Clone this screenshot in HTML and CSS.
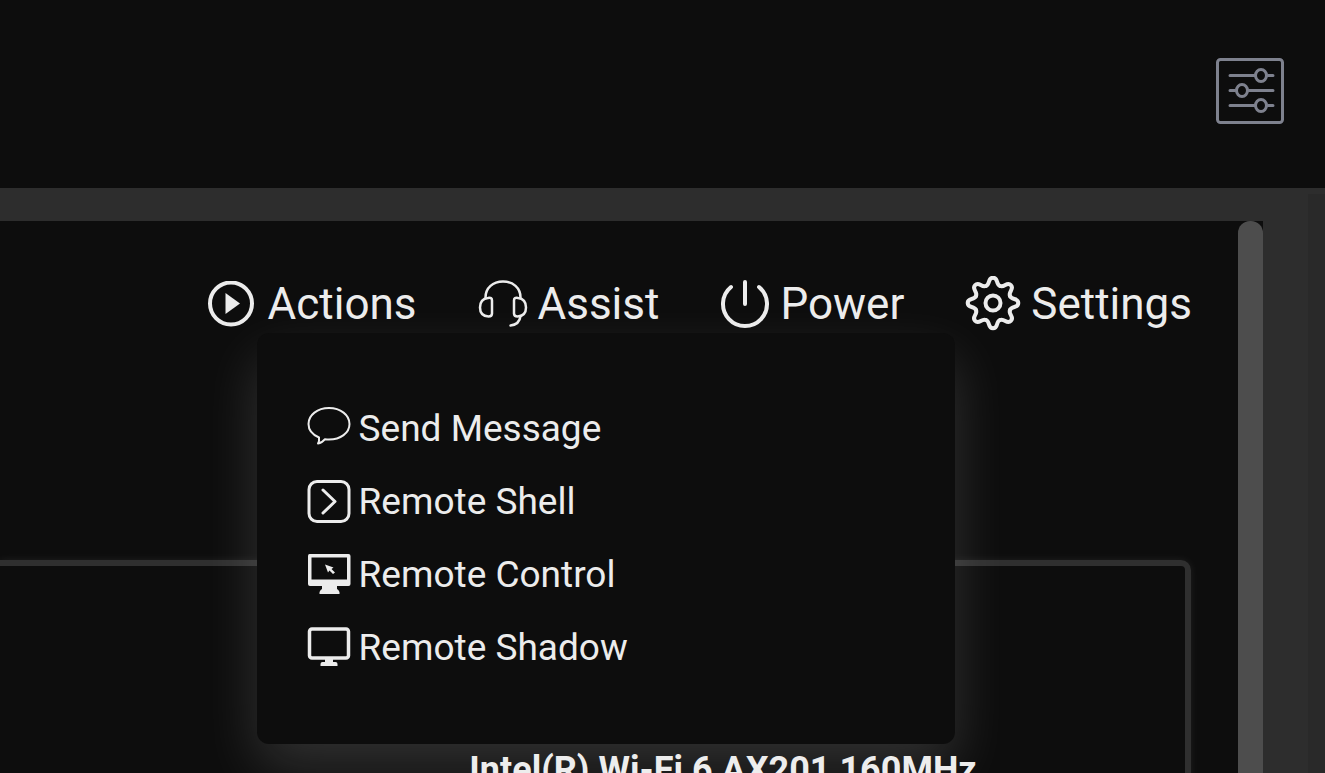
FILE: index.html
```
<!DOCTYPE html>
<html lang="en">
<head>
    <meta charset="UTF-8">
    <meta name="viewport" content="width=device-width, initial-scale=1.0">
    <title>Device</title>
    <link rel="stylesheet" href="styles.css">
</head>
<body>
    <header class="topbar">
        <button class="filter-btn" type="button" aria-label="Display options">
            <svg width="70" height="68" viewBox="0 0 70 68" fill="none" stroke="currentColor" stroke-width="3">
                <rect x="2.5" y="2.5" width="65" height="63" rx="3"/>
                <path stroke-linecap="round" d="M15 18.500H40M53 18.500H58M15 33.500H20M34 33.500H58M15 48.500H40M53 48.500H58"/>
                <ellipse cx="46" cy="18.500" rx="5.500" ry="6"/>
                <ellipse cx="27" cy="33.500" rx="5.500" ry="6"/>
                <ellipse cx="46" cy="48.500" rx="5.500" ry="6"/>
            </svg>
        </button>
    </header>

    <main class="page">
        <div class="panel">
            <nav>
                <ul class="toolbar">
                    <li class="has-menu">
                        <button type="button" class="tool tool-actions" aria-expanded="true">
                            <svg width="46" height="46" viewBox="0 0 46 46">
                                <circle cx="23" cy="22.500" r="21" fill="none" stroke="currentColor" stroke-width="4"/>
                                <path fill="currentColor" d="M17.500 12L32 22.500 17.500 33z"/>
                            </svg>
                            Actions
                        </button>
                        <ul class="menu">
                            <li><a href="#message">
                                <svg width="44" height="44" viewBox="0 0 44 44" fill="none" stroke="currentColor" stroke-width="2" stroke-linejoin="round">
                                    <path d="M12 30.500C5 27.500 1.500 22.500 1.500 17 1.500 8 10.500 1 22 1s20.500 7 20.500 16S33.500 32.500 22 32.500q-2 0-4-.3-3 3.800-7 4.300Q12.500 34 12 30.500z"/>
                                </svg>
                                Send Message
                            </a></li>
                            <li><a href="#shell">
                                <svg width="44" height="44" viewBox="0 0 44 44" fill="none" stroke="currentColor" stroke-width="3">
                                    <rect x="2" y="1.500" width="40" height="40" rx="8"/>
                                    <path stroke-linecap="round" stroke-linejoin="round" d="M16 10L28 21.500 16 33"/>
                                </svg>
                                Remote Shell
                            </a></li>
                            <li><a href="#control">
                                <svg width="44" height="44" viewBox="0 0 44 44" fill="currentColor">
                                    <path fill-rule="evenodd" d="M2.500 1H41.500q2 0 2 2V31q0 2-2 2H30v3q3 2 2.500 5H12.500Q12 38 15 36V33H3q-2 0-2-2V3Q1 1 2.500 1zM4.500 4.500V26.500H40V4.500z"/>
                                    <path d="M18 11.500L26.500 14.500 24.500 16 28 19.500 26 21 22.500 17.500 21 19.500z"/>
                                </svg>
                                Remote Control
                            </a></li>
                            <li><a href="#shadow">
                                <svg width="44" height="44" viewBox="0 0 44 44" fill="none" stroke="currentColor" stroke-width="3.500">
                                    <rect x="2.500" y="3" width="39" height="29" rx="2.500"/>
                                    <path fill="currentColor" stroke="none" d="M18 32h8v4h2.500q2 0 2 2v2h-17v-2q0-2 2-2H18z"/>
                                </svg>
                                Remote Shadow
                            </a></li>
                        </ul>
                    </li>
                    <li>
                        <button type="button" class="tool">
                            <svg width="50" height="50" viewBox="0 0 50 50" fill="none" stroke="currentColor" stroke-width="2.500" stroke-linecap="round">
                                <path d="M7.500 18.500C7.500 9 15 2.500 25 2.500s17.500 6.500 17.500 16"/>
                                <path d="M10 19q4-1 4 2.500v13q0 3-3.500 3Q2 37 2 28.500 2 20 10 19z"/>
                                <path d="M40 19q-4-1-4 2.500v13q0 3 3.500 3Q48 37 48 28.500 48 20 40 19z"/>
                                <path d="M42.500 37q-1 8.500-10 9.500"/>
                            </svg>
                            Assist
                        </button>
                    </li>
                    <li>
                        <button type="button" class="tool">
                            <svg width="50" height="50" viewBox="0 0 50 50" fill="none" stroke="currentColor" stroke-width="4" stroke-linecap="round">
                                <path d="M25 3V25M11 8A22 22 0 1 0 39 8"/>
                            </svg>
                            Power
                        </button>
                    </li>
                    <li>
                        <button type="button" class="tool">
                            <svg width="56" height="56" viewBox="-28 -27 56 56" fill="none" stroke="currentColor" stroke-width="4" stroke-linecap="round">
                                <defs>
                                    <path id="tooth" d="M-7-17C-2.500-18.800-5.500-25.300 0-25.300S2.500-18.800 7-17"/>
                                </defs>
                                <use href="#tooth"/>
                                <use href="#tooth" transform="rotate(45)"/>
                                <use href="#tooth" transform="rotate(90)"/>
                                <use href="#tooth" transform="rotate(135)"/>
                                <use href="#tooth" transform="rotate(180)"/>
                                <use href="#tooth" transform="rotate(225)"/>
                                <use href="#tooth" transform="rotate(270)"/>
                                <use href="#tooth" transform="rotate(315)"/>
                                <circle r="7.500"/>
                            </svg>
                            Settings
                        </button>
                    </li>
                </ul>
            </nav>

            <section class="card">
                <h2>Intel(R) Wi-Fi 6 AX201 160MHz</h2>
            </section>
        </div>
        <div class="scroll-track">
            <div class="scroll-thumb"></div>
        </div>
        <div class="gutter"></div>
        <div class="edge"></div>
    </main>
</body>
</html>
```
FILE: styles.css
```
* {
    box-sizing: border-box;
}

body {
    margin: 0;
    height: 100vh;
    display: flex;
    flex-direction: column;
    overflow: hidden;
    background-color: #0d0d0d;
    color: #ececec;
    font-family: Roboto, Arial, sans-serif;
}

ul {
    list-style: none;
    margin: 0;
    padding: 0;
}

svg {
    display: block;
    flex: none;
}

button {
    padding: 0;
    border: none;
    background: none;
    color: inherit;
    font-family: inherit;
    cursor: pointer;
}

.topbar {
    display: flex;
    justify-content: flex-end;
    padding: 57px 40px 63px;
}

.filter-btn {
    color: #7e818e;
}

.page {
    flex: 1;
    min-height: 0;
    display: flex;
    background-color: #2d2d2d;
}

.panel {
    flex: 1;
    display: flex;
    flex-direction: column;
    margin-top: 33px;
    padding: 48px 46px 0 0;
    background-color: #0d0d0d;
}

/* scrollbar and right side */
.scroll-track {
    display: flex;
    width: 25px;
    margin-top: 33px;
    background-color: #0d0d0d;
}

.scroll-thumb {
    flex: 1;
    border-radius: 12px 12px 0 0;
    background-color: #4d4d4d;
}

.gutter {
    width: 45px;
}

.edge {
    width: 17px;
    margin-top: 6px;
    background-color: #292929;
}

/* toolbar */
.toolbar {
    display: flex;
    justify-content: flex-end;
    gap: 61px;
}

.tool {
    display: flex;
    align-items: center;
    gap: 10px;
    height: 70px;
    font-size: 44px;
    line-height: 52px;
}

.tool-actions {
    gap: 14px;
}

.has-menu {
    position: relative;
}

.menu {
    position: absolute;
    z-index: 1;
    top: 64px;
    left: 49px;
    width: 698px;
    padding: 59px 50px 60px;
    border-radius: 12px;
    background-color: #0d0d0d;
    box-shadow: 0 24px 56px rgba(255, 255, 255, 0.15);
}

.menu a {
    display: flex;
    align-items: center;
    gap: 8px;
    height: 73px;
    color: inherit;
    font-size: 37px;
    line-height: 44px;
    text-decoration: none;
}

/* device card */
.card {
    flex: 1;
    margin: 221px 1px 0 0;
    padding: 182px 0 0 261px;
    border: 6px solid #2f2f2f;
    border-width: 6px 6px 0 0;
    border-radius: 0 10px 0 0;
    box-shadow: 0 0 8px rgba(255, 255, 255, 0.08);
}

.card h2 {
    margin: 0;
    font-size: 36px;
    line-height: 44px;
    text-align: center;
    white-space: nowrap;
}
```
